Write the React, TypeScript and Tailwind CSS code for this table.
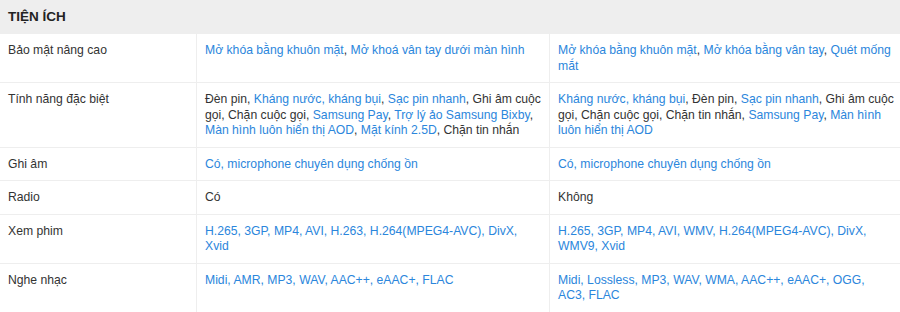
import React from "react";

type Seg = { t: string; link?: boolean };
type Line = Seg[];

const L = (t: string): Seg => ({ t, link: true });
const P = (t: string): Seg => ({ t });

const rows: { label: string; a: Line[]; b: Line[] }[] = [
  {
    label: "Bảo mật nâng cao",
    a: [[L("Mở khóa bằng khuôn mặt"), P(", "), L("Mở khoá vân tay dưới màn hình")]],
    b: [
      [L("Mở khóa bằng khuôn mặt"), P(", "), L("Mở khóa bằng vân tay"), P(", "), L("Quét mống")],
      [L("mắt")],
    ],
  },
  {
    label: "Tính năng đặc biệt",
    a: [
      [P("Đèn pin, "), L("Kháng nước, kháng bụi"), P(", "), L("Sạc pin nhanh"), P(", Ghi âm cuộc")],
      [P("gọi, Chặn cuộc gọi, "), L("Samsung Pay"), P(", "), L("Trợ lý ảo Samsung Bixby"), P(",")],
      [L("Màn hình luôn hiển thị AOD"), P(", "), L("Mặt kính 2.5D"), P(", Chặn tin nhắn")],
    ],
    b: [
      [L("Kháng nước, kháng bụi"), P(", Đèn pin, "), L("Sạc pin nhanh"), P(", Ghi âm cuộc")],
      [P("gọi, Chặn cuộc gọi, Chặn tin nhắn, "), L("Samsung Pay"), P(", "), L("Màn hình")],
      [L("luôn hiển thị AOD")],
    ],
  },
  {
    label: "Ghi âm",
    a: [[L("Có, microphone chuyên dụng chống ồn")]],
    b: [[L("Có, microphone chuyên dụng chống ồn")]],
  },
  {
    label: "Radio",
    a: [[P("Có")]],
    b: [[P("Không")]],
  },
  {
    label: "Xem phim",
    a: [[L("H.265, 3GP, MP4, AVI, H.263, H.264(MPEG4-AVC), DivX,")], [L("Xvid")]],
    b: [[L("H.265, 3GP, MP4, AVI, WMV, H.264(MPEG4-AVC), DivX,")], [L("WMV9, Xvid")]],
  },
  {
    label: "Nghe nhạc",
    a: [[L("Midi, AMR, MP3, WAV, AAC++, eAAC+, FLAC")]],
    b: [[L("Midi, Lossless, MP3, WAV, WMA, AAC++, eAAC+, OGG,")], [L("AC3, FLAC")]],
  },
];

function Cell({ lines }: { lines: Line[] }) {
  return (
    <>
      {lines.map((segs, j) => (
        <div key={j} className="whitespace-nowrap">
          {segs.map((s, i) =>
            s.link ? (
              <span key={i} className="text-[#2b86dc]">
                {s.t}
              </span>
            ) : (
              <span key={i}>{s.t}</span>
            )
          )}
        </div>
      ))}
    </>
  );
}

export default function App() {
  return (
    <div
      className="w-[900px] h-[312px] overflow-hidden bg-white text-[#333333] text-[12.2px] leading-[15.5px]"
      style={{ fontFamily: '"Liberation Sans", Arial, sans-serif' }}
    >
      <div className="h-[34px] bg-[#eeeeee] flex items-center pl-[8px]">
        <span className="font-bold text-[13.5px] text-[#222222]">TIỆN ÍCH</span>
      </div>
      {rows.map((r, i) => (
        <div key={i} className="grid grid-cols-[197px_353px_350px] border-b border-[#eeeeee]">
          <div className="pl-[8px] pr-[8px] pt-[9px] pb-[8px] border-r border-[#eeeeee]">{r.label}</div>
          <div className="pl-[8px] pr-[8px] pt-[9px] pb-[8px] border-r border-[#eeeeee]">
            <Cell lines={r.a} />
          </div>
          <div className="pl-[8px] pr-[8px] pt-[9px] pb-[8px]">
            <Cell lines={r.b} />
          </div>
        </div>
      ))}
    </div>
  );
}
